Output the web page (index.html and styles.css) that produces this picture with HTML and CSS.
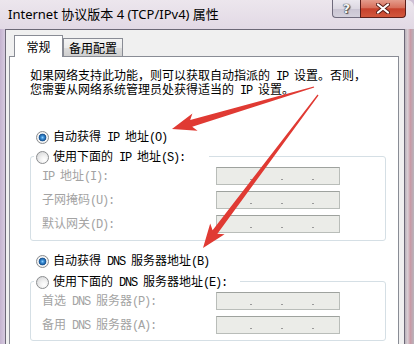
FILE: index.html
```html
<!DOCTYPE html>
<html lang="zh-CN">
<head>
    <meta charset="UTF-8">
    <meta name="viewport" content="width=device-width, initial-scale=1.0">
    <title>Internet 协议版本 4 (TCP/IPv4) 属性</title>
    <link rel="stylesheet" href="styles.css">
</head>
<body>
    <div class="window">
        <div class="titlebar">
            <div class="title">Internet 协议版本 4 (TCP/IPv4) 属性</div>
            <div class="caption-btns">
                <div class="cap-btn help">?</div>
                <div class="cap-btn close">
                    <svg width="14" height="11" viewBox="0 0 14 11">
                        <path d="M2 1.5 L12 9.5 M12 1.5 L2 9.5" stroke="#5a1e18" stroke-width="4" stroke-linecap="round"/>
                        <path d="M2 1.5 L12 9.5 M12 1.5 L2 9.5" stroke="#fff" stroke-width="2.2" stroke-linecap="round"/>
                    </svg>
                </div>
            </div>
        </div>

        <div class="client">
            <div class="tabs">
                <div class="tab active">常规</div>
                <div class="tab">备用配置</div>
            </div>

            <div class="panel">
                <p class="intro">如果网络支持此功能，则可以获取自动指派的<span class="a"> IP </span>设置。否则，<br>您需要从网络系统管理员处获得适当的<span class="a"> IP </span>设置。</p>

                <div class="radio-row first">
                    <span class="radio on"></span>
                    <span>自动获得<span class="a"> IP </span>地址<span class="a">(O)</span></span>
                </div>

                <div class="group">
                    <div class="group-label">
                        <span class="radio"></span>
                        <span>使用下面的<span class="a"> IP </span>地址<span class="a">(S):</span></span>
                    </div>
                    <div class="field">
                        <span class="field-label"><span class="a">IP </span>地址<span class="a">(I):</span></span>
                        <div class="ip"><i></i><i></i><i></i></div>
                    </div>
                    <div class="field">
                        <span class="field-label">子网掩码<span class="a">(U):</span></span>
                        <div class="ip"><i></i><i></i><i></i></div>
                    </div>
                    <div class="field">
                        <span class="field-label">默认网关<span class="a">(D):</span></span>
                        <div class="ip"><i></i><i></i><i></i></div>
                    </div>
                </div>

                <div class="radio-row second">
                    <span class="radio on"></span>
                    <span>自动获得<span class="a"> DNS </span>服务器地址<span class="a">(B)</span></span>
                </div>

                <div class="group dns">
                    <div class="group-label">
                        <span class="radio"></span>
                        <span>使用下面的<span class="a"> DNS </span>服务器地址<span class="a">(E):</span></span>
                    </div>
                    <div class="field">
                        <span class="field-label">首选<span class="a"> DNS </span>服务器<span class="a">(P):</span></span>
                        <div class="ip"><i></i><i></i><i></i></div>
                    </div>
                    <div class="field">
                        <span class="field-label">备用<span class="a"> DNS </span>服务器<span class="a">(A):</span></span>
                        <div class="ip"><i></i><i></i><i></i></div>
                    </div>
                </div>
            </div>
        </div>

        <div class="frame-right"></div>

        <!-- annotation arrows -->
        <svg class="arrows" width="414" height="344" viewBox="0 0 414 344">
            <polygon points="313.8,86.4 190.2,119.9 192.4,113.6 172,129 197.6,130.8 192.2,126.7 314.2,87.6" />
            <polygon points="317.5,94.6 212.6,230.2 210.2,223.4 203,248 224.6,234.2 217.4,233.8 318.5,95.4" />
        </svg>
    </div>
</body>
</html>
```

FILE: styles.css
```css
* {
    margin: 0;
    padding: 0;
    box-sizing: border-box;
}

html,
body {
    width: 414px;
    height: 344px;
    overflow: hidden;
}

body {
    font-family: "Noto Sans CJK SC", sans-serif;
    font-size: 12px;
    color: #000;
    background: #cdbfd5;
}

.window {
    position: relative;
    width: 414px;
    height: 344px;
    background: linear-gradient(90deg, #c4b3cf 0, #d6cadf 5px, #ddd3e2 50%, #d6c3cd 100%);
    border-top-right-radius: 7px;
    overflow: hidden;
}

/* title bar */
.titlebar {
    display: flex;
    align-items: flex-start;
    height: 29px;
    padding-left: 8px;
    background: linear-gradient(180deg, #ece6ed 0%, #e2d9e5 100%);
}

.title {
    font-family: "Noto Sans", "Noto Sans CJK SC", sans-serif;
    font-size: 13px;
    line-height: 16px;
    padding-top: 6px;
    color: #000;
}

.caption-btns {
    display: flex;
    margin-left: auto;
    margin-right: 8px;
}

.cap-btn {
    height: 18px;
    display: flex;
    align-items: center;
    justify-content: center;
    border: 1px solid #6f6a7c;
    border-top: none;
}

.cap-btn.help {
    width: 28px;
    border-right: none;
    border-bottom-left-radius: 4px;
    background: linear-gradient(180deg, #ebe8ef 0%, #dcd8e2 50%, #c9c4d2 51%, #d4d0dc 100%);
    font-family: "DejaVu Sans", sans-serif;
    font-weight: bold;
    font-size: 13px;
    color: #f4f4f6;
    text-shadow: 0 0 1px #333, 0 0 1px #333, 1px 1px 1px #555;
}

.cap-btn.close {
    width: 46px;
    border-color: #5c1f1a;
    border-bottom-right-radius: 4px;
    background: linear-gradient(180deg, #e49c8c 0%, #d8705c 45%, #c6412c 52%, #d2573d 100%);
}

/* client area */
.client {
    width: 400px;
    height: 315px;
    margin-left: 5px;
    border: 1px solid #6c6877;
    border-bottom: none;
    background: #f0f0f0;
    padding: 5px 5px 0 3px;
}

/* glass edge on the right, with the desktop showing through */
.frame-right {
    position: absolute;
    top: 29px;
    right: 0;
    width: 9px;
    height: 315px;
    background: linear-gradient(90deg, #b9b3bb 0, #d9cdd3 30%, #c99aa6 60%, #b8b4bc 100%);
}

.tabs {
    display: flex;
    align-items: flex-end;
    height: 21px;
    padding-left: 5px;
}

.tab {
    height: 18px;
    line-height: 17px;
    padding: 0 5px;
    border: 1px solid #898c95;
    border-bottom: none;
    background: linear-gradient(180deg, #f4f4f4 0%, #ebebeb 50%, #dddddd 51%, #cfcfcf 100%);
    text-align: center;
}

.tab.active {
    width: 49px;
    height: 22px;
    line-height: 21px;
    margin-bottom: -1px;
    background: #fff;
    position: relative;
    z-index: 1;
}

.panel {
    height: 300px;
    border: 1px solid #898c95;
    border-bottom: none;
    background: #fff;
    padding: 12px 12px 0 20px;
}

.a {
    font-family: "Liberation Mono", monospace;
    letter-spacing: -1.2px;
    white-space: pre;
}

.intro {
    line-height: 12px;
}

.radio-row {
    display: flex;
    align-items: center;
    gap: 4px;
    height: 14px;
    padding-left: 6px;
    line-height: 14px;
}

.radio-row.first {
    margin-top: 33px;
}

.radio-row.second {
    margin-top: 13px;
}

.radio {
    flex: none;
    width: 13px;
    height: 13px;
    border-radius: 50%;
    border: 1px solid #8b8d8f;
    background: radial-gradient(circle at 65% 70%, #ffffff 0, #f2f2f2 35%, #cfd0d2 100%);
}

.radio.on {
    background: radial-gradient(circle at 50% 50%, #8fd0ff 0, #3b8fd6 1.5px, #16508f 3.5px, #f6f6f6 4.2px, #e4e4e4 100%);
}

/* group boxes */
.group {
    width: 356px;
    margin-top: 12px;
    border: 1px solid #d5dfe5;
    border-radius: 3px;
    padding: 0 0 7px 11px;
}

.group.dns {
    margin-top: 13px;
    padding-bottom: 6px;
}

.group-label {
    display: flex;
    align-items: center;
    gap: 4px;
    width: max-content;
    height: 14px;
    line-height: 14px;
    margin: -7px 0 0 -8px;
    padding: 0 24px 0 2px;
    background: #fff;
}

.group.dns .group-label {
    padding-right: 13px;
}

.field {
    display: flex;
    align-items: center;
    height: 18px;
    margin-top: 6px;
    color: #a3a3a3;
    line-height: 14px;
}

.group-label + .field {
    margin-top: 3px;
}

.field-label {
    width: 174px;
}

.ip {
    display: flex;
    align-items: flex-end;
    gap: 29px;
    width: 124px;
    height: 18px;
    padding: 0 0 4px 33px;
    border: 1px solid #b9bdb9;
    border-top-color: #9ea29e;
    background: #ebece8;
}

.ip i {
    width: 2px;
    height: 1px;
    background: #9a9a9a;
}

/* annotation */
.arrows {
    position: absolute;
    top: 0;
    left: 0;
    pointer-events: none;
}

.arrows polygon {
    fill: #e03a33;
}
```
